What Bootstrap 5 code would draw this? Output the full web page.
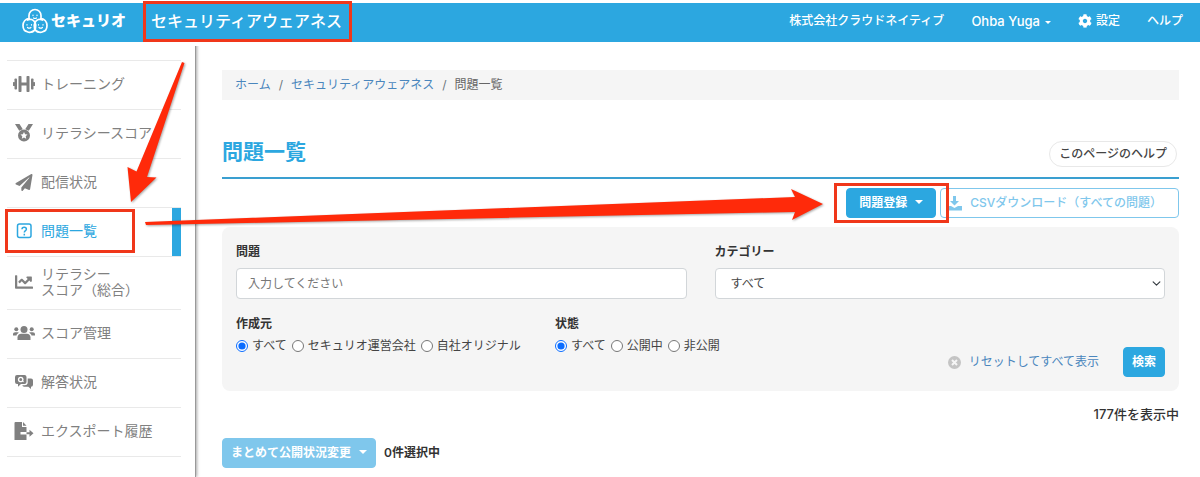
<!DOCTYPE html>
<html lang="ja">
<head>
<meta charset="utf-8">
<meta name="viewport" content="width=device-width, initial-scale=1">
<title>問題一覧 | セキュリオ</title>
<link href="https://cdn.jsdelivr.net/npm/bootstrap@5.3.0/dist/css/bootstrap.min.css" rel="stylesheet">
<script src="https://cdn.jsdelivr.net/npm/bootstrap@5.3.0/dist/js/bootstrap.bundle.min.js" defer></script>
<style>
:root { --brand: #2ca7e0; --brand-soft: #7fc7ec; --link: #4a86bd; --mark: #f0371a; --panel: #f5f5f5; }
body { font-family: Inter, "Noto Sans CJK JP", sans-serif; font-size: 12px; line-height: 18px; color: #333; padding-top: 3px; min-height: 100vh; display: flex; flex-direction: column; overflow-x: hidden; }
a { text-decoration: none; color: var(--link); }
svg { flex: none; display: block; }
.topbar { background: var(--brand); height: 39px; padding: 0 17px 4px 22px; color: #fff; font-weight: 500; }
.topbar a { color: #fff; }
.brand-name { font-size: 15px; font-weight: 900; margin-left: 3px; }
.app-title { font-size: 16px; font-weight: 500; margin-left: 25px; position: relative; }
.topnav { gap: 27px; }
.marked::after { content: ""; position: absolute; border: 3px solid var(--mark); z-index: 5; pointer-events: none; }
.app-title.marked::after { inset: -11px -10px -12px -8px; }
.sidebar { width: 196px; flex: none; padding: 18px 14px 0 7px; border-right: 1px solid #999; box-shadow: 1px 0 3px rgba(0,0,0,.35); clip-path: inset(4px -6px 0 0); }
.side-list { border-top: 1px solid #e9e9e9; }
.side-list li { border-bottom: 1px solid #e9e9e9; position: relative; }
.side-list a { display: flex; align-items: center; gap: 6px; height: 48px; padding: 0 0 2px 6px; color: #808080; font-size: 14px; line-height: 16px; white-space: nowrap; }
.side-list a.two-line { height: 52px; }
.side-list a.current { color: var(--brand); border-right: 9px solid var(--brand); }
.side-list .marked::after { inset: 1px 46px 3px -2px; }
.content { padding: 28px 21px 0 26px; }
.crumbs { background: var(--panel); padding: 6px 13px; --bs-breadcrumb-item-padding-x: 8px; --bs-breadcrumb-font-size: 12px; --bs-breadcrumb-divider-color: #6c757d; color: #666; }
.page-head { border-bottom: 2px solid #3a9fd0; margin-top: 31px; height: 48px; padding: 7px 2px 0 0; align-items: flex-start; }
.page-head h1 { font-size: 21px; line-height: 28px; font-weight: 700; color: var(--brand); }
.help-pill { border: 1px solid #e8e8e8; border-radius: 13px; height: 26px; padding: 3px 9px; margin-top: 3px; color: #444; font-weight: 500; }
.actions { margin-top: 9px; }
.act { --bs-btn-font-size: 12px; --bs-btn-line-height: 18px; --bs-btn-padding-y: 5px; --bs-btn-padding-x: 12px; --bs-btn-border-radius: 4px; --bs-btn-font-weight: 700; --bs-btn-color: #fff; --bs-btn-bg: var(--brand); --bs-btn-border-color: var(--brand); --bs-btn-hover-bg: #1c95cd; --bs-btn-hover-color: #fff; --bs-btn-disabled-color: #fff; --bs-btn-disabled-bg: var(--brand-soft); --bs-btn-disabled-border-color: var(--brand-soft); --bs-btn-disabled-opacity: 1; }
.act.dropdown-toggle::after { margin-left: 8px; vertical-align: 3px; border-width: 4px 4px 0; }
.act-line { --bs-btn-disabled-color: var(--brand-soft); --bs-btn-disabled-bg: #fff; --bs-btn-font-weight: 500; padding-left: 6px; padding-right: 16px; }
.menu-caret { font-size: 13px; }
.menu-caret::after { margin-left: 5px; vertical-align: 2px; }
.register.marked { position: relative; }
.register.marked::after { inset: -5px -13px -5px -12px; }
.search-panel { background: var(--panel); border-radius: 8px; margin-top: 9px; padding: 16px 0 14px; }
.search-panel .row { --bs-gutter-x: 28px; margin: 0; }
.field-name { font-weight: 700; font-size: 12px; line-height: 18px; margin: 0; float: none; color: #333; }
.field { font-size: 12px; line-height: 18px; height: 31px; padding: 5px 11px; border-radius: 4px; margin-top: 7px; border-color: #d2d6d9; }
.field::placeholder { color: #777; }
select.field { padding-left: 15px; background-size: 9px 9px; background-position: right 3px center; color: #444; }
.choices { gap: 5px; white-space: nowrap; color: #444; }
.choices input { width: 12px; height: 12px; margin: 0 4px 0 0; accent-color: #0a6cff; }
.choices label { display: flex; align-items: center; }
.count { font-size: 13px; font-weight: 500; margin-top: 14px; }
.bulk { margin-top: 15px; }
.arrows { position: absolute; left: 0; top: 0; z-index: 6; pointer-events: none; filter: drop-shadow(1px 1px 1px rgba(0,0,0,.35)); }
</style>
</head>
<body>
<header class="topbar d-flex align-items-center">
  <a href="#" class="d-flex align-items-center">
    <svg width="26" height="26" viewBox="0 0 26 26" fill="none" stroke="#fff" stroke-width="1.7" stroke-linecap="round">
      <path d="M7 10.5V7.5a6 6 0 0 1 12 0v3M7 10.3C3.5 11 1 14 1 17.500c0 3.500 2 6 5 6.500M19 10.300c3.500.700 6 3.700 6 7.200 0 3.500-2 6-5 6.500M13 14.500c-1.500-3-5-4-7.500-2.500M13 14.500c1.500-3 5-4 7.500-2.500M13 14.500c2 4 .500 9-4 9.700-2 .300-4-.200-5-1.200M13 14.500c-2 4-.500 9 4 9.700 2 .300 4-.200 5-1.200"/>
      <path stroke-width="1.200" d="M11 7v.6M15 7v.6M11.500 10q1.500 1 3 0M5 16.500v.6M9.500 16.500v.6M5.500 19.500q1.700 1.400 3.400 0M16.500 16.500v.6M21 16.500v.6M17 19.500q1.700 1.400 3.400 0"/>
    </svg>
    <span class="brand-name">セキュリオ</span>
  </a>
  <span class="app-title marked">セキュリティアウェアネス</span>
  <nav class="topnav d-flex align-items-center ms-auto">
    <span>株式会社クラウドネイティブ</span>
    <a href="#" class="dropdown-toggle menu-caret">Ohba Yuga</a>
    <a href="#" class="d-flex align-items-center gap-1">
      <svg width="14" height="14" viewBox="0 0 512 512" fill="currentColor"><path d="M487.400 315.700l-42.600-24.600c4.300-23.200 4.300-47 0-70.200l42.600-24.600c4.900-2.800 7.100-8.600 5.500-14-11.100-35.600-30-67.800-54.700-94.600-3.800-4.100-10-5.100-14.800-2.300L380.800 110c-17.900-15.400-38.500-27.300-60.800-35.100V25.800c0-5.600-3.900-10.500-9.400-11.700-36.700-8.200-74.300-7.800-109.200 0-5.500 1.200-9.400 6.100-9.400 11.700V75c-22.200 7.900-42.800 19.800-60.800 35.100L88.700 85.500c-4.900-2.800-11-1.900-14.800 2.300-24.700 26.700-43.600 58.900-54.700 94.600-1.700 5.400.6 11.200 5.500 14L67.300 221c-4.300 23.200-4.300 47 0 70.200l-42.600 24.600c-4.900 2.800-7.100 8.600-5.500 14 11.100 35.600 30 67.800 54.700 94.600 3.800 4.100 10 5.100 14.800 2.300l42.600-24.600c17.900 15.400 38.500 27.300 60.800 35.100v49.200c0 5.600 3.900 10.500 9.400 11.700 36.700 8.200 74.300 7.800 109.200 0 5.500-1.200 9.400-6.100 9.400-11.700v-49.200c22.200-7.900 42.800-19.800 60.800-35.100l42.600 24.600c4.900 2.800 11 1.900 14.800-2.300 24.700-26.700 43.600-58.900 54.700-94.600 1.500-5.500-.7-11.300-5.600-14.100zM256 336c-44.100 0-80-35.900-80-80s35.900-80 80-80 80 35.900 80 80-35.900 80-80 80z"/></svg>
      設定</a>
    <a href="#">ヘルプ</a>
  </nav>
</header>

<div class="d-flex flex-grow-1">
  <nav class="sidebar">
    <ul class="side-list list-unstyled m-0">
      <li><a href="#"><svg width="22" height="18" viewBox="0 0 22 18" fill="currentColor"><rect x="0" y="7" width="2" height="4" rx=".5"/><rect x="1.500" y="3.500" width="2.500" height="11" rx=".8"/><rect x="5.500" y="1" width="3" height="16" rx=".8"/><rect x="8" y="7.500" width="6" height="3"/><rect x="13.500" y="1" width="3" height="16" rx=".8"/><rect x="18" y="3.500" width="2.500" height="11" rx=".8"/><rect x="20" y="7" width="2" height="4" rx=".5"/></svg>トレーニング</a></li>
      <li><a href="#"><svg width="22" height="20" viewBox="0 0 22 20" fill="currentColor"><path d="M2 1h4.500l3.300 5.300-3.600 1.400zM20 1h-4.500l-3.300 5.300 3.600 1.400z"/><path fill-rule="evenodd" d="M11 6.500a6 6 0 1 1 0 12 6 6 0 0 1 0-12zm0 2.500l-1.100 2.200-2.400.3 1.800 1.700-.5 2.500 2.200-1.200 2.200 1.200-.5-2.500 1.800-1.700-2.400-.3z"/></svg>リテラシースコア</a></li>
      <li><a href="#"><svg width="22" height="17" viewBox="-70 0 652 512" fill="currentColor"><path d="M476 3.200L12.500 270.600c-18.100 10.400-15.800 35.600 2.200 43.200L121 358.400l287.300-253.200c5.500-4.900 13.300 2.600 8.600 8.300L176 407v80.500c0 23.600 28.500 32.900 42.500 15.800L282 426l124.600 52.200c14.200 6 30.400-2.900 33-18.200l72-432C515 7.800 493.300-6.800 476 3.200z"/></svg>配信状況</a></li>
      <li class="marked"><a href="#" class="current" aria-current="page"><svg width="22" height="16" viewBox="0 0 22 16" fill="none" stroke="currentColor" stroke-width="1.500"><rect x="4.500" y="1" width="13.500" height="13.500" rx="2"/><path d="M9 6.200c0-2.600 4.400-2.600 4.400 0 0 1.500-2.100 1.500-2.100 3.300M11.300 10.800v1.600"/></svg>問題一覧</a></li>
      <li><a href="#" class="two-line"><svg width="22" height="18" viewBox="-50 0 612 512" fill="currentColor"><path d="M496 384H64V80c0-8.840-7.160-16-16-16H16C7.160 64 0 71.160 0 80v336c0 17.670 14.330 32 32 32h464c8.840 0 16-7.160 16-16v-32c0-8.840-7.160-16-16-16zM464 96H345.940c-21.380 0-32.090 25.850-16.970 40.970l32.400 32.400L288 242.750l-73.370-73.370c-12.500-12.500-32.760-12.500-45.250 0l-68.690 68.690c-6.250 6.250-6.250 16.380 0 22.630l22.620 22.620c6.250 6.250 16.380 6.250 22.630 0L192 237.250l73.370 73.370c12.500 12.500 32.760 12.500 45.250 0l96-96 32.400 32.400c15.120 15.120 40.970 4.410 40.970-16.970V112c.01-8.840-7.150-16-15.990-16z"/></svg><span>リテラシー<br>スコア（総合）</span></a></li>
      <li><a href="#"><svg width="22" height="16" viewBox="0 0 22 16" fill="currentColor"><circle cx="11" cy="4.500" r="3.500"/><path d="M4.500 15v-2.500c0-2.200 1.500-3.700 3.700-3.700h5.600c2.200 0 3.700 1.500 3.700 3.700V15z"/><circle cx="3.300" cy="4.200" r="2"/><circle cx="18.700" cy="4.200" r="2"/><path d="M0 10.500V9.300C0 8 .9 7.200 2.200 7.200h2.400c.6 0 1 .2 1.400.6-1.400.6-2.200 1.500-2.500 2.700zM22 10.500V9.300c0-1.300-.9-2.100-2.200-2.100h-2.400c-.6 0-1 .2-1.400.6 1.400.6 2.200 1.500 2.500 2.700z"/></svg>スコア管理</a></li>
      <li><a href="#"><svg width="22" height="16" viewBox="0 0 22 16" fill="currentColor"><path fill-rule="evenodd" d="M4 1h7.500a2 2 0 0 1 2 2v5a2 2 0 0 1-2 2H8l-3 2.700V10H4a2 2 0 0 1-2-2V3a2 2 0 0 1 2-2zm3.700 1.700a2.800 2.800 0 1 0 1.700 5l.9.600.6-.7-.7-.7a2.800 2.800 0 0 0-2.500-4.200zm0 1.300a1.500 1.500 0 1 1 0 3 1.500 1.500 0 0 1 0-3z"/><path d="M14.700 4.500H18a2 2 0 0 1 2 2v4.300a2 2 0 0 1-2 2V15l-2.700-2.200H11a2 2 0 0 1-1.700-1.600h2.400a3 3 0 0 0 3-3z"/></svg>解答状況</a></li>
      <li><a href="#"><svg width="22" height="18" viewBox="0 0 22 18" fill="currentColor"><path d="M2.500 0H9v5h4.500v5H7.500v2.500h6V18h-12V1a1 1 0 0 1 1-1z"/><path d="M10 0l3.500 3.700H10z"/><path d="M13.500 10.300h3V7.800l4 3.500-4 3.500v-2.500h-3z"/></svg>エクスポート履歴</a></li>
    </ul>
  </nav>

  <main class="content flex-grow-1">
    <nav aria-label="breadcrumb">
      <ol class="breadcrumb crumbs m-0">
        <li class="breadcrumb-item"><a href="#">ホーム</a></li>
        <li class="breadcrumb-item"><a href="#">セキュリティアウェアネス</a></li>
        <li class="breadcrumb-item" aria-current="page">問題一覧</li>
      </ol>
    </nav>
    <div class="page-head d-flex justify-content-between">
      <h1 class="m-0">問題一覧</h1>
      <a href="#" class="help-pill">このページのヘルプ</a>
    </div>
    <div class="actions d-flex justify-content-end gap-1">
      <div class="register marked">
        <button type="button" class="btn act dropdown-toggle">問題登録</button>
      </div>
      <button type="button" class="btn act act-line d-flex align-items-center gap-2" disabled>
        <svg width="15" height="15" viewBox="0 0 15 15" fill="currentColor"><path d="M6 0h3v5h3L7.500 9.500 3 5h3zM0 10h4l3.500 2L11 10h4v4.500H0z"/></svg>
        CSVダウンロード（すべての問題）</button>
    </div>

    <form class="search-panel">
      <div class="row">
        <div class="col-6">
          <label class="field-name d-block" for="q">問題</label>
          <input id="q" type="text" class="form-control field" placeholder="入力してください">
        </div>
        <div class="col-6">
          <label class="field-name d-block" for="cat">カテゴリー</label>
          <select id="cat" class="form-select field"><option>すべて</option></select>
        </div>
      </div>
      <div class="row pt-3">
        <fieldset class="col-4 pt-1">
          <legend class="field-name">作成元</legend>
          <div class="choices d-flex">
            <label><input type="radio" name="src" checked>すべて</label>
            <label><input type="radio" name="src">セキュリオ運営会社</label>
            <label><input type="radio" name="src">自社オリジナル</label>
          </div>
        </fieldset>
        <fieldset class="col-3 pt-1">
          <legend class="field-name">状態</legend>
          <div class="choices d-flex">
            <label><input type="radio" name="st" checked>すべて</label>
            <label><input type="radio" name="st">公開中</label>
            <label><input type="radio" name="st">非公開</label>
          </div>
        </fieldset>
        <div class="col-5 d-flex justify-content-end align-items-center pt-4 mt-2">
          <a href="#" class="d-flex align-items-center gap-2 me-4">
            <svg width="13" height="13" viewBox="0 0 13 13"><circle cx="6.500" cy="6.500" r="6.500" fill="#c4c4c4"/><path d="M4 4l5 5M9 4l-5 5" stroke="#f5f5f5" stroke-width="2"/></svg>
            リセットしてすべて表示</a>
          <button type="submit" class="btn act px-2">検索</button>
        </div>
      </div>
    </form>

    <div class="count text-end">177件を表示中</div>
    <div class="bulk d-flex align-items-center gap-2">
      <button type="button" class="btn act dropdown-toggle px-2" disabled>まとめて公開状況変更</button>
      <span class="fw-semibold">0件選択中</span>
    </div>
  </main>
</div>

<!-- Guide arrows laid over the page -->
<svg class="arrows" width="830" height="240" viewBox="0 0 830 240" fill="#ff2a0a" aria-hidden="true">
  <path d="M182 62l2.500 1L147 177l9.500.5L131 202l-3.500-35 9 4.500z"/>
  <path d="M145 222l650-25-4-8 32 15-31 16 3-8-649 13z"/>
</svg>
</body>
</html>
